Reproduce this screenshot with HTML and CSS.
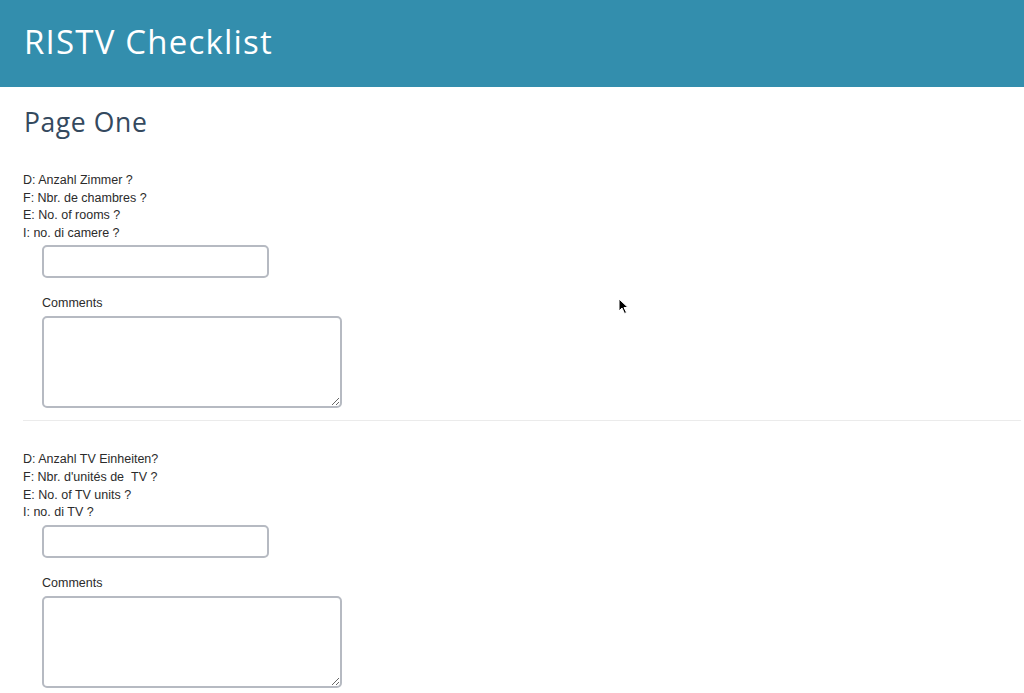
FILE: index.html
```html
<!DOCTYPE html>
<html lang="de">
<head>
  <meta charset="UTF-8">
  <meta name="viewport" content="width=device-width, initial-scale=1.0">
  <title>RISTV Checklist</title>
  <link rel="stylesheet" href="styles.css">
</head>
<body>
  <header class="topbar">
    <h1>RISTV Checklist</h1>
  </header>

  <main class="page">
    <h2 class="page-title">Page One</h2>

    <div class="question">
      <div class="question-label">
        D: Anzahl Zimmer ?<br>
        F: Nbr. de chambres ?<br>
        E: No. of rooms ?<br>
        I: no. di camere ?
      </div>
      <div class="answer">
        <input type="text" class="field">
        <label class="comment-label">Comments</label>
        <textarea class="comment"></textarea>
      </div>
    </div>

    <div class="question">
      <div class="question-label">
        D: Anzahl TV Einheiten?<br>
        F: Nbr. d'unités de &nbsp;TV ?<br>
        E: No. of TV units ?<br>
        I: no. di TV ?
      </div>
      <div class="answer">
        <input type="text" class="field">
        <label class="comment-label">Comments</label>
        <textarea class="comment"></textarea>
      </div>
    </div>
  </main>

  <!-- mouse pointer from the screenshot -->
  <svg class="pointer" width="12" height="17" viewBox="0 0 12 17">
    <path d="M1 1 L1 13 L4 10 L6.5 15.5 L8.5 14.5 L6 9.5 L10 9.5 Z" fill="#000" stroke="#fff" stroke-width="1"/>
  </svg>
</body>
</html>
```

FILE: styles.css
```css
body {
  margin: 0;
  padding: 0;
  background: #fff;
  font-family: "Liberation Sans", Arial, sans-serif;
  color: #333;
}
.topbar {
  background-color: #338ead;
  height: 87px;
  padding: 0 24px;
  display: flex;
  align-items: center;
}
.topbar h1 {
  margin: 0;
  color: #fff;
  font-family: "Open Sans", sans-serif;
  font-weight: 400;
  font-size: 33px;
  letter-spacing: 1.2px;
  padding-bottom: 4px;
}
.page {
  padding: 0 3px 0 23px;
}
.page-title {
  margin: 0;
  padding: 19px 0 0 1px;
  font-family: "Open Sans", sans-serif;
  font-weight: 400;
  font-size: 26.5px;
  letter-spacing: 0.6px;
  line-height: 32px;
  color: #34495e;
}
.question {
  padding: 34px 0 12px 0;
  border-bottom: 1px solid #ebebeb;
}
.question + .question {
  padding-top: 30px;
}
.question-label {
  font-size: 12.5px;
  line-height: 17.6px;
  color: #2b2b2b;
}
.answer {
  padding-left: 19px;
  padding-top: 3px;
}
.field {
  display: block;
  box-sizing: border-box;
  width: 227px;
  height: 33px;
  margin: 0;
  border: 2px solid #b6bac2;
  border-radius: 5px;
  background: #fff;
}
.comment-label {
  display: block;
  font-size: 12.5px;
  line-height: 17px;
  margin-top: 17px;
  margin-bottom: 4px;
  color: #2b2b2b;
}
.comment {
  display: block;
  box-sizing: border-box;
  width: 300px;
  height: 92px;
  margin: 0;
  border: 2px solid #b6bac2;
  border-radius: 5px;
  background: #fff;
  resize: both;
}
.pointer {
  position: absolute;
  left: 618px;
  top: 298px;
}
```
